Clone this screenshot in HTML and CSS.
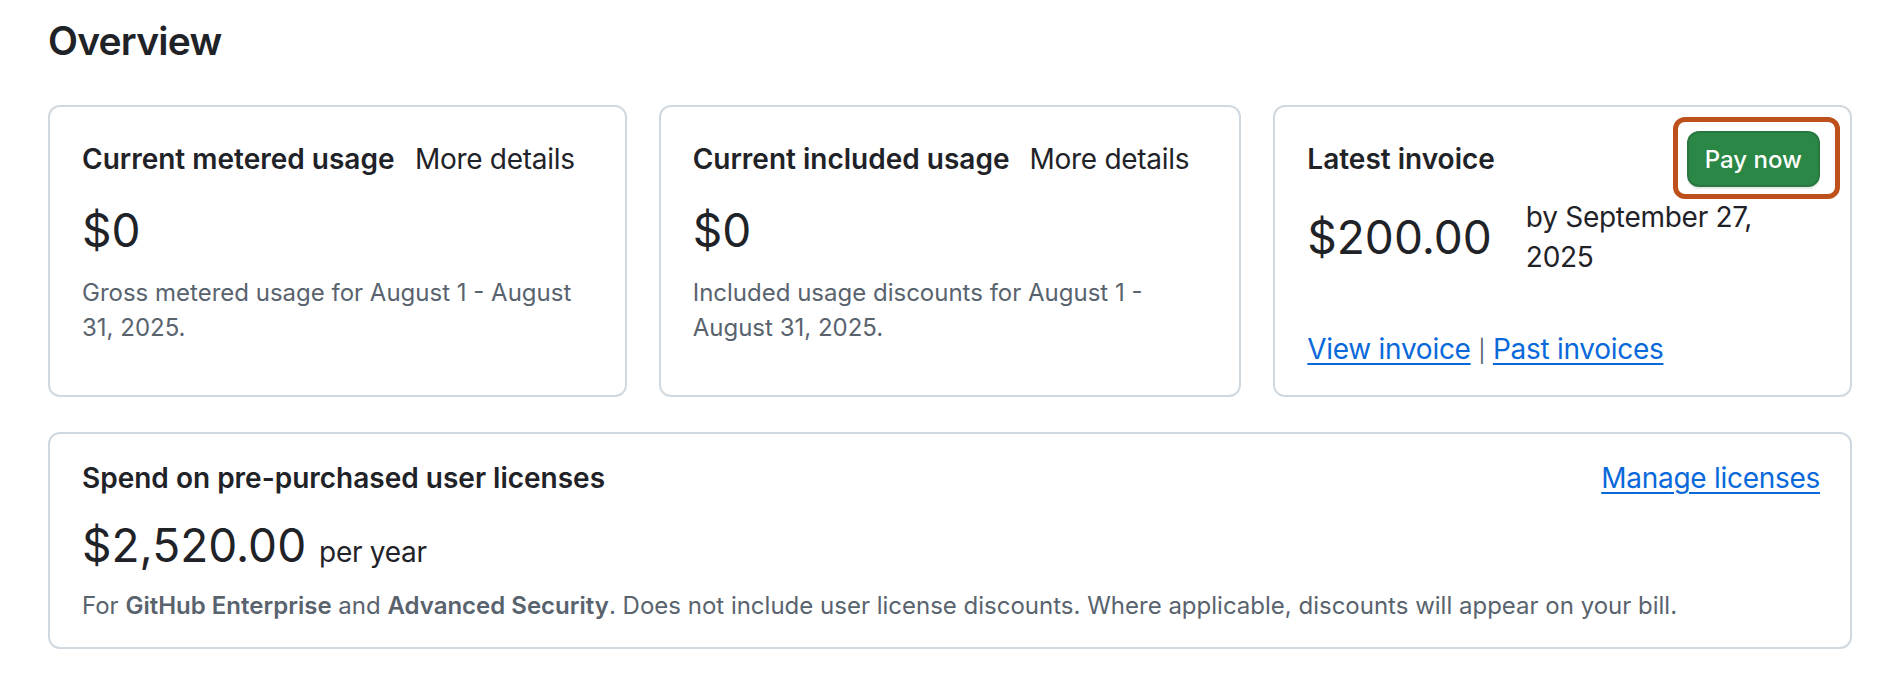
FILE: index.html
```html
<!DOCTYPE html>
<html lang="en">
<head>
<meta charset="utf-8">
<title>Overview</title>
<link rel="stylesheet" href="styles.css">
</head>
<body>
<main class="page">
  <h2 class="page-title">Overview</h2>
  <div class="cards">
    <section class="card">
      <div class="card-header">
        <h3 class="card-title">Current metered usage</h3>
        <button class="btn-invisible" type="button">More details</button>
      </div>
      <div class="amount">$0</div>
      <p class="desc">Gross metered usage for August 1 - August 31, 2025.</p>
    </section>
    <section class="card">
      <div class="card-header">
        <h3 class="card-title">Current included usage</h3>
        <button class="btn-invisible" type="button">More details</button>
      </div>
      <div class="amount">$0</div>
      <p class="desc">Included usage discounts for August 1 - August 31, 2025.</p>
    </section>
    <section class="card">
      <div class="card-header">
        <h3 class="card-title">Latest invoice</h3>
        <span class="highlight"><button class="btn-primary" type="button">Pay now</button></span>
      </div>
      <div class="invoice-row">
        <div class="amount">$200.00</div>
        <div class="due">by September 27, 2025</div>
      </div>
      <div class="invoice-links"><a href="#" class="link">View invoice</a> <span class="sep">|</span> <a href="#" class="link">Past invoices</a></div>
    </section>
  </div>
  <section class="card card-wide">
    <div class="wide-header">
      <h3 class="card-title">Spend on pre-purchased user licenses</h3>
      <a href="#" class="link">Manage licenses</a>
    </div>
    <div class="amount-line"><span class="amount-inline">$2,520.00</span> <span class="per">per year</span></div>
    <p class="desc">For <strong>GitHub Enterprise</strong> and <strong>Advanced Security</strong>. Does not include user license discounts. Where applicable, discounts will appear on your bill.</p>
  </section>
</main>
</body>
</html>
```
FILE: styles.css
```css
* { box-sizing: border-box; }
html, body { margin: 0; background: #ffffff; }
body {
  font-family: Inter, "Liberation Sans", Arial, sans-serif;
  color: #1f2328;
}
.page {
  padding: 16px 44px 0 48px;
}
.page-title {
  margin: 0;
  font-size: 39px;
  line-height: 50px;
  font-weight: 600;
  letter-spacing: -0.02em;
}
.cards {
  display: grid;
  grid-template-columns: repeat(3, 1fr);
  gap: 32px;
  margin-top: 39px;
}
.card {
  border: 2px solid #d1d9e0;
  border-radius: 12px;
  padding: 24px 30px 24px 32px;
  background: #fff;
}
.card-header {
  display: flex;
  align-items: center;
  justify-content: space-between;
  height: 56px;
  white-space: nowrap;
}
.card-title {
  margin: 0;
  font-size: 28px;
  line-height: 40px;
  font-weight: 600;
  white-space: nowrap;
}
.btn-invisible {
  flex-shrink: 0;
  font-family: inherit;
  font-size: 28px;
  font-weight: 400;
  letter-spacing: -0.01em;
  color: #1f2328;
  background: transparent;
  border: 0;
  height: 56px;
  padding: 0 20px;
  white-space: nowrap;
  cursor: pointer;
}
.highlight {
  position: relative;
  display: inline-flex;
  flex-shrink: 0;
}
.highlight::after {
  content: "";
  position: absolute;
  top: -14px;
  left: -14px;
  right: -20px;
  bottom: -12px;
  border: 5px solid #be501c;
  border-radius: 12px;
  pointer-events: none;
}
.btn-primary {
  font-family: inherit;
  font-size: 24px;
  font-weight: 500;
  color: #ffffff;
  background: #2a8745;
  border: 2px solid rgba(31, 35, 40, 0.15);
  border-radius: 12px;
  height: 56px;
  padding: 0 16px;
  box-shadow: 0 2px 0 rgba(31, 35, 40, 0.1);
  white-space: nowrap;
  cursor: pointer;
}
.amount {
  margin-top: 13px;
  font-size: 46px;
  line-height: 60px;
  font-weight: 400;
}
.desc {
  margin: 15px 0 0;
  font-size: 24px;
  line-height: 35px;
  color: #59636e;
}
.desc strong { font-weight: 600; }
.invoice-row {
  display: flex;
  align-items: center;
  gap: 34px;
  margin-top: 10px;
}
.invoice-row .amount { margin-top: 0; }
.due {
  font-size: 28px;
  line-height: 40px;
  letter-spacing: -0.01em;
  max-width: 260px;
}
.invoice-links {
  margin-top: 52px;
  font-size: 28px;
  line-height: 40px;
  letter-spacing: -0.01em;
}
.link {
  color: #0969da;
  text-decoration: underline;
  text-decoration-thickness: 2px;
  text-underline-offset: 4px;
}
.sep {
  font-size: 22px;
  color: #59636e;
}
.card-wide {
  margin-top: 35px;
}
.wide-header {
  display: flex;
  align-items: center;
  justify-content: space-between;
  font-size: 28px;
  line-height: 40px;
}
.wide-header .link { letter-spacing: -0.01em; }
.amount-line {
  margin-top: 17px;
  font-size: 46px;
  line-height: 60px;
}
.per {
  font-size: 28px;
  line-height: 1;
  letter-spacing: -0.01em;
}
.card-wide .desc { margin-top: 13px; }
```
